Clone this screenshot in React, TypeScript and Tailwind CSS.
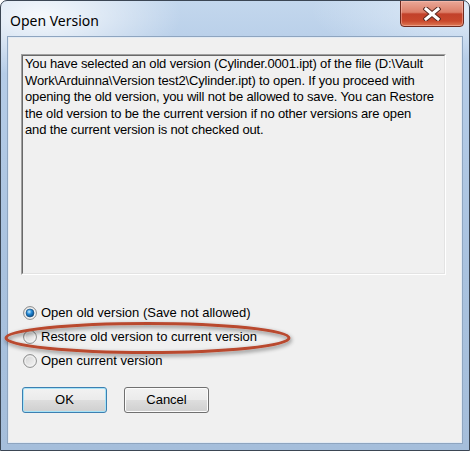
import React from "react";

const font = { fontFamily: '"Liberation Sans", Arial, sans-serif' };

function Radio({ checked }: { checked?: boolean }) {
  return (
    <svg width="14" height="14" viewBox="0 0 14 14" className="shrink-0">
      <defs>
        <linearGradient id="rb" x1="0" y1="0" x2="1" y2="1">
          <stop offset="0" stopColor="#d0d0d0" />
          <stop offset="1" stopColor="#f8f8f8" />
        </linearGradient>
        <radialGradient id="dot" cx="0.4" cy="0.35" r="0.7">
          <stop offset="0" stopColor="#c4ecff" />
          <stop offset="0.45" stopColor="#2187d6" />
          <stop offset="1" stopColor="#08457e" />
        </radialGradient>
      </defs>
      <circle cx="7" cy="7" r="6.4" fill="url(#rb)" stroke="#8a8b8b" strokeWidth="1" />
      <circle cx="7" cy="7" r="5" fill="none" stroke="#f4f4f4" strokeWidth="1" />
      {checked && <circle cx="7" cy="7" r="4" fill="url(#dot)" stroke="#1b4f7a" strokeWidth="0.6" />}
    </svg>
  );
}

export default function App() {
  return (
    <div
      className="relative w-[470px] h-[451px] overflow-hidden rounded-t-[7px] border border-[#3b4654] px-[7px] pb-[7px] pt-[36px]"
      style={{
        ...font,
        background:
          "radial-gradient(ellipse 140px 60px at 40px 15px, rgba(255,255,255,0.85), rgba(255,255,255,0) 100%), radial-gradient(ellipse 160px 50px at 470px 10px, rgba(230,240,250,0.8), rgba(255,255,255,0) 100%), linear-gradient(180deg, #c3d7ed 0%, #b6cde8 12%, #a9c2df 60%, #a5bedb 100%)",
      }}
    >
      {/* Title */}
      <div
        className="absolute left-[9px] top-[10px] text-[14px] leading-[20px] text-black"
        style={{ fontFamily: '"Noto Sans", "Open Sans", sans-serif' }}
      >
        Open Version
      </div>
      {/* Close button */}
      <div
        className="absolute left-[399px] top-[-1px] w-[64px] h-[27px] rounded-b-[4px] border border-[#6e2a1f] flex items-center justify-center shadow-[inset_0_0_0_1px_rgba(255,200,190,0.45)]"
        style={{
          background:
            "linear-gradient(180deg, #e9a898 0%, #dc7e68 45%, #c2412a 52%, #c9482c 80%, #dd7a55 100%)",
        }}
      >
        <svg width="18" height="14" viewBox="0 0 18 14">
          <path d="M3 2 L15 12 M15 2 L3 12" stroke="#5a2a22" strokeWidth="5" strokeLinecap="square" />
          <path d="M3 2 L15 12 M15 2 L3 12" stroke="#ffffff" strokeWidth="3" strokeLinecap="square" />
        </svg>
      </div>

      {/* Client area */}
      <div className="h-full w-full bg-[#f0f0f0] border border-[#e4ebf3] shadow-[0_0_0_1px_#8ea5c0] flex flex-col">
        {/* text box */}
        <div className="ml-[12px] mt-[16px] w-[425px] h-[221px] border border-t-[#a0a0a0] border-l-[#a0a0a0] border-b-white border-r-white">
          <div className="h-full w-full border border-t-[#696969] border-l-[#696969] border-b-[#e3e3e3] border-r-[#e3e3e3] pl-[2px] pt-[0px] text-[13px] leading-[16.5px] tracking-[-0.15px] text-black whitespace-nowrap">
            You have selected an old version (Cylinder.0001.ipt) of the file (D:\Vault
            <br />
            Work\Arduinna\Version test2\Cylinder.ipt) to open. If you proceed with
            <br />
            opening the old version, you will not be allowed to save. You can Restore
            <br />
            the old version to be the current version if no other versions are open
            <br />
            and the current version is not checked out.
          </div>
        </div>

        {/* radios */}
        <div className="mt-[26px] ml-[14px] flex flex-col text-[13px] text-black">
          <div className="h-[24px] flex items-center gap-[4px]">
            <Radio checked />
            <span>Open old version (Save not allowed)</span>
          </div>
          <div className="h-[24px] flex items-center gap-[4px]">
            <Radio />
            <span>Restore old version to current version</span>
          </div>
          <div className="h-[24px] flex items-center gap-[4px]">
            <Radio />
            <span>Open current version</span>
          </div>
        </div>

        {/* buttons */}
        <div className="mt-[14px] ml-[13px] flex gap-[17px]">
          <div
            className="w-[85px] h-[26px] rounded-[3px] border border-[#3c7fb1] flex items-center justify-center text-[13px] text-black shadow-[inset_0_0_0_1px_#a7e3f7]"
            style={{ background: "linear-gradient(180deg, #f2f2f2 0%, #ebebeb 48%, #dddddd 52%, #cfcfcf 100%)" }}
          >
            OK
          </div>
          <div
            className="w-[85px] h-[26px] rounded-[3px] border border-[#707070] flex items-center justify-center text-[13px] text-black shadow-[inset_0_0_0_1px_#fcfcfc]"
            style={{ background: "linear-gradient(180deg, #f2f2f2 0%, #ebebeb 48%, #dddddd 52%, #cfcfcf 100%)" }}
          >
            Cancel
          </div>
        </div>
      </div>

      {/* annotation ellipse */}
      <svg className="absolute left-0 top-[315px] pointer-events-none" width="300" height="48" viewBox="0 0 300 48">
        <defs>
          <filter id="sh" x="-10%" y="-30%" width="120%" height="160%">
            <feGaussianBlur in="SourceAlpha" stdDeviation="2" />
            <feOffset dx="1" dy="2" />
            <feComponentTransfer>
              <feFuncA type="linear" slope="0.5" />
            </feComponentTransfer>
            <feMerge>
              <feMergeNode />
              <feMergeNode in="SourceGraphic" />
            </feMerge>
          </filter>
        </defs>
        <ellipse cx="146.5" cy="22" rx="141.5" ry="14.5" fill="none" stroke="#b9482f" strokeWidth="3" filter="url(#sh)" />
      </svg>
    </div>
  );
}
